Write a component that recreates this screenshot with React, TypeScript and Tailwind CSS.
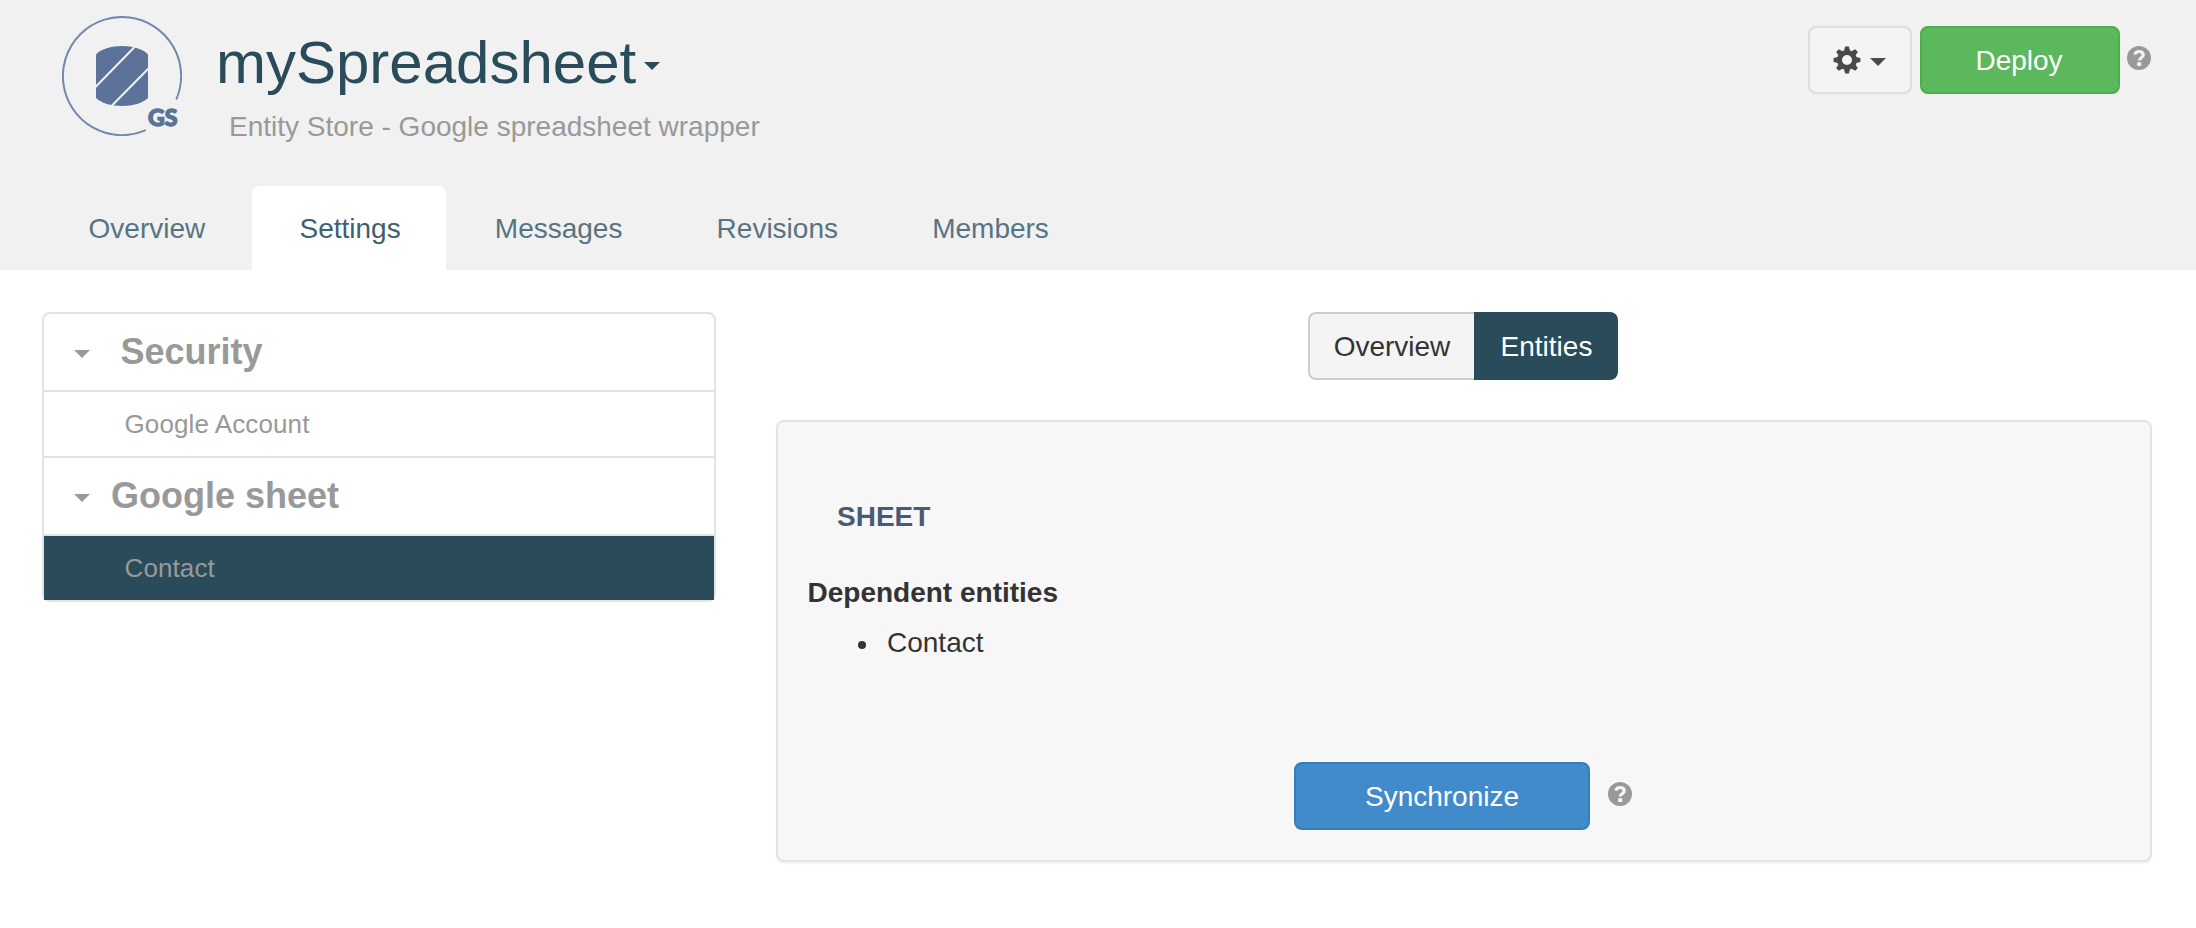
import React from "react";

const Caret = ({ className = "" }: { className?: string }) => (
  <span
    className={`block h-0 w-0 shrink-0 border-x-[8px] border-t-[8px] border-x-transparent border-t-current ${className}`}
  />
);

const Logo = () => (
  <svg viewBox="0 0 120 120" className="h-[120px] w-[120px] shrink-0" fill="none">
    <path d="M114.3 83.5A59.100 59.100 0 1 0 83.800 114.200" stroke="#7388ae" strokeWidth="2" />
    <path
      d="M34 38.500C39 33 49 30 60 30s21 3 26 8.500v43.500C81 87 71 90 60 90s-21-3-26-8z"
      fill="#5c7298"
    />
    <path d="M33 71.500L73.500 30M49 90.500L87 52" stroke="#f1f1f1" strokeWidth="2" />
    <text
      x="86"
      y="109.500"
      fill="#5c7298"
      stroke="#5c7298"
      strokeWidth="1.300"
      fontFamily="Lato, sans-serif"
      fontWeight="900"
      fontSize="22.500"
      textLength="29.500"
      lengthAdjust="spacingAndGlyphs"
    >
      GS
    </text>
  </svg>
);

const teeth = [0, 45, 90, 135, 180, 225, 270, 315];

const Gear = () => (
  <svg viewBox="0 0 28 28" className="h-[28px] w-[28px] shrink-0" fill="#4a4a4a">
    <circle cx="14" cy="14" r="7.500" fill="none" stroke="#4a4a4a" strokeWidth="5" />
    {teeth.map((a) => (
      <path key={a} d="M11 5L12.100 0.600h3.800L17 5z" transform={`rotate(${a} 14 14)`} />
    ))}
  </svg>
);

const Help = ({ mark, className = "" }: { mark: string; className?: string }) => (
  <svg viewBox="0 0 24 24" className={`h-6 w-6 shrink-0 ${className}`}>
    <circle cx="12" cy="12" r="12" fill="#999" />
    <path
      d="M8 8.700C8.200 6.700 9.700 5.500 12 5.500c2.500 0 4.200 1.300 4.200 3.400 0 2.900-3.900 2.800-3.900 5.700"
      fill="none"
      stroke={mark}
      strokeWidth="3.200"
    />
    <path d="M10.200 16.200h4v3.800h-4z" fill={mark} />
  </svg>
);

const tabs = ["Overview", "Settings", "Messages", "Revisions", "Members"];

export default function App() {
  return (
    <div className="h-[928px] w-[2196px] overflow-hidden bg-white font-['Liberation_Sans',Arial,sans-serif] text-[28px] leading-[40px] text-[#333]">
      <header className="flex h-[270px] flex-col justify-between bg-[#f1f1f1]">
        <div className="flex items-start pt-4 pl-[62px]">
          <Logo />
          <div className="ml-[34px] pt-[14px]">
            <h1 className="flex items-center text-[60px] leading-[66px] text-[#294b5a]">
              mySpreadsheet
              <Caret className="mt-[5px] ml-[8px]" />
            </h1>
            <p className="mt-[11px] ml-[13px] text-[#999]">Entity Store - Google spreadsheet wrapper</p>
          </div>
          <div className="mt-[10px] mr-[45px] ml-auto flex">
            <button className="mr-2 flex h-[68px] w-[104px] items-center rounded-lg border-2 border-[#ddd] bg-[#f4f4f4] pl-[23px] text-[#4a4a4a]">
              <Gear />
              <Caret className="mt-1 ml-[9px]" />
            </button>
            <button className="mr-[7px] h-[68px] w-[200px] rounded-lg border-2 border-[#4cae4c] bg-[#5cb85c] pt-px pr-[2px] text-white">
              Deploy
            </button>
            <Help mark="#f1f1f1" className="mt-5" />
          </div>
        </div>
        <nav className="flex gap-[1.4px] pl-[41px]">
          {tabs.map((t) => (
            <a
              key={t}
              className={`h-[84px] rounded-t-lg pt-[23px] pr-[45.2px] pl-[47.6px] ${
                t === "Settings" ? "bg-white text-[#3f5f70]" : "text-[#587482]"
              }`}
            >
              {t}
            </a>
          ))}
        </nav>
      </header>

      <main className="flex items-start pt-[42px] pl-[42px]">
        <aside className="w-[674px] rounded-lg border-2 border-[#e3e3e3] text-[26px] text-[#999]">
          <h2 className="flex h-[78px] items-center border-b-2 border-[#e3e3e3] pl-[30px] text-[36px] font-bold">
            <Caret className="mt-[3px]" />
            <span className="ml-[30.5px]">Security</span>
          </h2>
          <div className="flex h-[66px] items-center border-b-2 border-[#e3e3e3] pl-[80.5px] tracking-[0.1px]">
            Google Account
          </div>
          <h2 className="flex h-[78px] items-center border-b-2 border-[#e3e3e3] pl-[30px] text-[36px] font-bold">
            <Caret className="mt-[3px]" />
            <span className="ml-[21px]">Google sheet</span>
          </h2>
          <div className="flex h-16 items-center bg-[#294b5a] pl-[80.5px] tracking-[0.1px]">Contact</div>
        </aside>

        <section className="ml-[60px] w-[1376px]">
          <div className="flex h-[68px] justify-center pr-[2px]">
            <button className="w-[166px] rounded-l-lg border-2 border-r-0 border-[#ccc] bg-[#f4f4f4] pt-px">
              Overview
            </button>
            <button className="w-[144px] rounded-r-lg bg-[#294b5a] pt-px pl-px text-white">Entities</button>
          </div>
          <div className="mt-10 h-[442px] rounded-lg border-2 border-[#e3e3e3] bg-[#f7f7f7] pt-[75px] pl-[29px] shadow-[0_2px_2px_rgba(0,0,0,0.05)]">
            <h3 className="ml-[30px] font-bold text-[#4a5a74]">SHEET</h3>
            <p className="mt-9 ml-[0.5px] font-bold">Dependent entities</p>
            <ul className="mt-[10px] flex items-center pl-[51px]">
              <li className="flex items-center gap-[21px]">
                <span className="mt-[3px] h-[8px] w-[8px] rounded-full bg-[#333]" />
                Contact
              </li>
            </ul>
            <div className="mt-[99px] flex justify-center pr-[31px]">
              <button className="h-[68px] w-[296px] rounded-lg border-2 border-[#357ebd] bg-[#428bca] pt-px text-white">
                Synchronize
              </button>
              <Help mark="#f7f7f7" className="mt-5 ml-[18px]" />
            </div>
          </div>
        </section>
      </main>
    </div>
  );
}
